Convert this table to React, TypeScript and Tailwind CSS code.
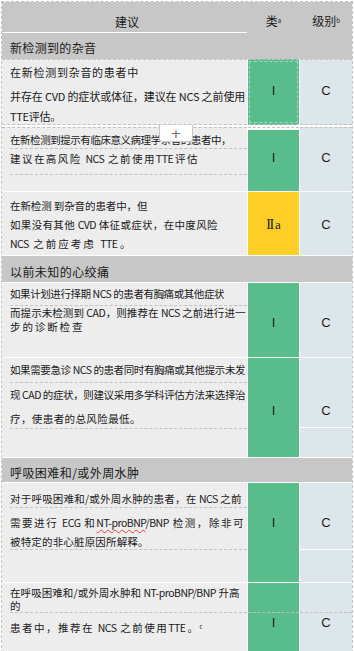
import type { ReactNode } from "react";

const dash = "border-dashed border-[#c2c2c2]";
const left = "w-[245px] bg-[#ededed] pl-[8px]";
const green = "bg-[#58bd8b]";
const blue = "bg-[#dde6ea]";
const body = "text-[10.5px] tracking-[-0.5px]";
const grade = "text-center font-['Liberation_Sans',sans-serif] text-[13px] leading-[16px] tracking-normal text-[#1f1f1f]";

// one printed line of a cell, spread out to the width it takes in the document
function Line({ w, children }: { w: string; children: ReactNode }) {
  return <div className={`${w} text-justify [text-align-last:justify]`}>{children}</div>;
}

function Section({ children, h, pt }: { children: ReactNode; h: string; pt: string }) {
  return (
    <div className={`mt-px bg-[#c7c7c7] pl-[8px] text-[12px] leading-[16px] ${h} ${pt}`}>{children}</div>
  );
}

export default function App() {
  return (
    <div className="relative w-[354px] h-[651px] overflow-hidden bg-white font-['Noto_Sans_CJK_SC',sans-serif] text-[#1a1a1a]">
      <div className={`ml-[1px] mt-[1px] w-[352px] border-x border-t ${dash}`}>
        {/* table head + first group */}
        <div className="h-[57px] bg-[#c7c7c7] text-[12px]">
          <div className="flex h-[31px] gap-px">
            <div className="w-[245px] border-b border-white pl-[5px] pt-[10px] text-center leading-[19px]">建议</div>
            <div className="w-[51px] pt-[9px] text-center leading-[19px]">
              类<sup className="text-[6px]">a</sup>
            </div>
            <div className="w-[52px] pt-[9px] text-center leading-[19px]">
              级别<sup className="text-[6px]">b</sup>
            </div>
          </div>
          <div className="h-[26px] pl-[8px] pt-[7px] leading-[16px]">
            <Line w="w-[86px]">新检测到的杂音</Line>
          </div>
        </div>

        {/* row 1 */}
        <div className="flex h-[66px] gap-px text-[11px] tracking-[-0.3px] leading-[16px]">
          <div className={`${left} border-y ${dash} flex flex-col`}>
            <div className="flex h-[24px] items-center">
              <Line w="w-[128px]">在新检测到杂音的患者中</Line>
            </div>
            <div className="flex h-[24px] items-center">
              <Line w="w-[235px]">并存在 CVD 的症状或体征，建议在 NCS 之前使用</Line>
            </div>
            <div className="flex h-[16px] items-center">TTE评估。</div>
          </div>
          <div className={`w-[51px] border-y ${dash} ${green} p-px`}>
            <div className={`h-full border border-dashed border-[#a3d8bd] pt-[21px] ${grade}`}>I</div>
          </div>
          <div className={`w-[52px] border-y ${dash} ${blue} pt-[23px] ${grade}`}>C</div>
        </div>

        {/* row 2 */}
        <div className={`mt-[2px] flex h-[64px] gap-px ${body} leading-[16px]`}>
          <div className={`${left} border-t ${dash} flex flex-col`}>
            <div className={`flex h-[21px] items-end border-b ${dash}`}>
              <Line w="w-[221px]">在新检测到提示有临床意义病理学杂音的患者中，</Line>
            </div>
            <div className={`h-[26px] border-b ${dash} pt-[2px]`}>
              <Line w="w-[187px]">建议在高风险 NCS 之前使用TTE评估</Line>
            </div>
            <div className="flex-1" />
          </div>
          <div className={`w-[51px] border-t ${dash} flex flex-col pt-[2px]`}>
            <div className={`flex-1 ${green} pt-[20px] ${grade}`}>I</div>
          </div>
          <div className={`w-[52px] border-t ${dash} ${blue} pt-[22px] ${grade}`}>C</div>
        </div>

        {/* row 3 */}
        <div className={`mt-px flex h-[63px] gap-px ${body} leading-[19px]`}>
          <div className={`${left} pt-[4px]`}>
            <Line w="w-[137px]">在新检测 到杂音的患者中，但</Line>
            <Line w="w-[207px]">如果没有其他 CVD 体征或症状，在中度风险</Line>
            <Line w="w-[120px]">NCS 之前应考虑 TTE。</Line>
          </div>
          <div className="w-[51px] bg-[#fecf26] pt-[25px] text-center leading-[16px] tracking-normal">
            <span className="font-['Liberation_Serif',serif] text-[14px] tracking-[-1.2px]">II</span>
            <span className="ml-[2px] font-['Liberation_Serif',serif] text-[13px]">a</span>
          </div>
          <div className={`w-[52px] ${blue} pt-[25px] ${grade}`}>C</div>
        </div>

        <Section h="h-[26px]" pt="pt-[8px]">
          <Line w="w-[99px]">以前未知的心绞痛</Line>
        </Section>

        {/* row 4 */}
        <div className={`mt-px flex h-[74px] gap-px ${body} leading-[14px]`}>
          <div className={`${left} flex flex-col`}>
            <div className={`flex h-[23px] items-center border-b ${dash}`}>
              <Line w="w-[214px]">如果计划进行择期 NCS 的患者有胸痛或其他症状</Line>
            </div>
            <Line w="w-[235px]">而提示未检测到 CAD，则推荐在 NCS 之前进行进一</Line>
            <Line w="w-[72px]">步的诊断检查</Line>
          </div>
          <div className={`w-[51px] ${green} pt-[32px] ${grade}`}>I</div>
          <div className={`w-[52px] ${blue} pt-[32px] ${grade}`}>C</div>
        </div>

        {/* row 5 */}
        <div className={`mt-px flex h-[99px] gap-px ${body} leading-[16px]`}>
          <div className={`${left} flex flex-col`}>
            <div className={`flex h-[25px] items-center border-b ${dash}`}>
              <Line w="w-[235px]">如果需要急诊 NCS 的患者同时有胸痛或其他提示未发</Line>
            </div>
            <div className={`h-[46px] border-b ${dash} leading-[24px]`}>
              <Line w="w-[235px]">现 CAD 的症状，则建议采用多学科评估方法来选择治</Line>
              <Line w="w-[130px]">疗，使患者的总风险最低。</Line>
            </div>
            <div className="flex-1" />
          </div>
          <div className={`w-[51px] ${green} pt-[45px] ${grade}`}>I</div>
          <div className={`w-[52px] ${blue} flex flex-col`}>
            <div className={`h-[70px] border-b border-white pt-[45px] ${grade}`}>C</div>
            <div className="flex-1" />
          </div>
        </div>

        <Section h="h-[24px]" pt="pt-[7px]">
          <Line w="w-[129px]">呼吸困难和/或外周水肿</Line>
        </Section>

        {/* row 6 */}
        <div className={`mt-px flex h-[99px] gap-px ${body} leading-[16px]`}>
          <div className={`${left} flex flex-col`}>
            <div className={`flex h-[25px] items-end border-b ${dash}`}>
              <Line w="w-[231px]">对于呼吸困难和/或外周水肿的患者，在 NCS 之前</Line>
            </div>
            <div className={`h-[42px] border-b ${dash} pt-[5px] leading-[19px]`}>
              <Line w="w-[233px]">
                需要进行 ECG 和
                <span className="underline decoration-wavy decoration-[#e0403a] decoration-1 underline-offset-2">NT-proBNP</span>
                /BNP 检测，除非可
              </Line>
              <Line w="w-[138px]">被特定的非心脏原因所解释。</Line>
            </div>
            <div className="flex-1" />
          </div>
          <div className={`w-[51px] ${green} pt-[32px] ${grade}`}>I</div>
          <div className={`w-[52px] ${blue} flex flex-col`}>
            <div className={`h-[67px] border-b border-white pt-[32px] ${grade}`}>C</div>
            <div className="flex-1" />
          </div>
        </div>

        {/* row 7 */}
        <div className={`mt-px flex h-[70px] gap-px ${body}`}>
          <div className={`${left} flex flex-col`}>
            <div className={`h-[30px] border-b ${dash} pt-[3px] leading-[13px]`}>
              <Line w="w-[229px]">在呼吸困难和/或外周水肿和 NT-proBNP/BNP 升高</Line>
              <div>的</div>
            </div>
            <div className="pt-[7px] leading-[16px]">
              <Line w="w-[192px]">
                患者中，推荐在 NCS 之前使用TTE。<sup className="text-[6px]">c</sup>
              </Line>
            </div>
          </div>
          <div className={`w-[51px] ${green} flex flex-col`}>
            <div className={`h-[30px] border-b ${dash}`} />
            <div className={`pt-[2px] ${grade}`}>I</div>
          </div>
          <div className={`w-[52px] ${blue} flex flex-col`}>
            <div className={`h-[30px] border-b ${dash}`} />
            <div className={`pt-[2px] ${grade}`}>C</div>
          </div>
        </div>
      </div>

      {/* Word's "insert row" handle hovering over the table */}
      <div className="absolute left-[159px] top-[125px] flex h-[17px] w-[34px] items-center justify-center rounded-b-[3px] border border-t-0 border-[#c6c6c6] bg-white text-[13px] leading-none text-[#6b6b6b] font-['DejaVu_Sans',sans-serif]">
        +
      </div>
    </div>
  );
}
